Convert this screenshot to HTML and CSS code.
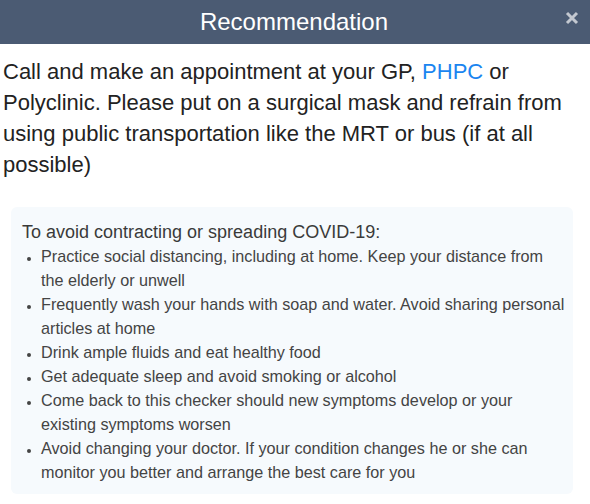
FILE: index.html
```html
<!DOCTYPE html>
<html>
<head>
<meta charset="utf-8">
<link rel="stylesheet" href="styles.css">
</head>
<body>
<div class="modal">
  <header class="head">
    <h1 class="title">Recommendation</h1>
    <span class="close" aria-label="Close">
      <svg width="14" height="14" viewBox="0 0 14 14"><path d="M2 2 L12 12 M12 2 L2 12" stroke="#c3c8d0" stroke-width="3" stroke-linecap="butt"/></svg>
    </span>
  </header>
  <div class="content">
    <p class="lead">Call and make an appointment at your GP, <a class="link" href="#">PHPC</a> or Polyclinic. Please put on a surgical mask and refrain from using public transportation like the MRT or bus (if at all possible)</p>
    <div class="tips">
      <p class="tips-title">To avoid contracting or spreading COVID-19:</p>
      <ul class="tips-list">
        <li>Practice social distancing, including at home. Keep your distance from the elderly or unwell</li>
        <li>Frequently wash your hands with soap and water. Avoid sharing personal articles at home</li>
        <li>Drink ample fluids and eat healthy food</li>
        <li>Get adequate sleep and avoid smoking or alcohol</li>
        <li>Come back to this checker should new symptoms develop or your existing symptoms worsen</li>
        <li>Avoid changing your doctor. If your condition changes he or she can monitor you better and arrange the best care for you</li>
      </ul>
    </div>
  </div>
</div>
</body>
</html>
```

FILE: styles.css
```css
* { box-sizing: border-box; }
html, body { margin: 0; padding: 0; background: #fff; }
body { font-family: "Liberation Sans", Arial, sans-serif; width: 590px; height: 504px; overflow: hidden; }
.head {
  height: 44px;
  background: #4b5b73;
  display: flex;
  align-items: center;
  justify-content: center;
  position: relative;
}
.title {
  margin: 0;
  color: #fff;
  font-size: 24px;
  font-weight: normal;
  line-height: 1;
  padding-right: 2px;
}
.close {
  position: absolute;
  right: 11px;
  top: 11px;
  width: 14px;
  height: 14px;
  display: flex;
}
.content { padding: 0 17px 0 3px; }
.lead {
  margin: 12px 0 0;
  font-size: 22px;
  line-height: 31px;
  color: #222;
}
.link { color: #1a85f0; text-decoration: none; }
.tips {
  margin: 27px 0 0 8px;
  background: #f6fafd;
  border-radius: 6px;
  padding: 13px 6px 10px 11px;
}
.tips-title {
  margin: 0;
  font-size: 18px;
  line-height: 24px;
  color: #3a3a3a;
}
.tips-list {
  margin: 0;
  padding-left: 19px;
  font-size: 16.2px;
  line-height: 24px;
  color: #444;
}
.tips-list li::marker { font-size: 12px; }
```
